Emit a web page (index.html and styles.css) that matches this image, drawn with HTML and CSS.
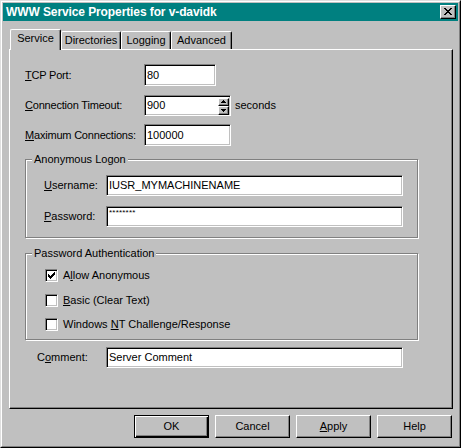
FILE: index.html
```html
<!DOCTYPE html>
<html>
<head>
<meta charset="utf-8">
<link rel="stylesheet" href="styles.css">
</head>
<body>
<div class="window">
  <div class="window-inner">
    <div class="titlebar">
      <span class="title">WWW Service Properties for v-davidk</span>
      <div class="close">
        <svg width="8" height="7" viewBox="0 0 8 7" shape-rendering="crispEdges"><path d="M0 0h2v1h-2zM6 0h2v1h-2zM1 1h2v1h-2zM5 1h2v1h-2zM2 2h4v1h-4zM3 3h2v1h-2zM2 4h4v1h-4zM1 5h2v1h-2zM5 5h2v1h-2zM0 6h2v1h-2zM6 6h2v1h-2z" fill="#000"/></svg>
      </div>
    </div>
    <div class="body">
      <div class="tabs">
        <div class="tab active w-service">Service</div>
        <div class="tab w-dir">Directories</div>
        <div class="tab w-log">Logging</div>
        <div class="tab w-adv">Advanced</div>
      </div>
      <div class="panel">
        <div class="row row1">
          <span class="label lbl-main"><u>T</u>CP Port:</span>
          <div class="edit w72">80</div>
        </div>
        <div class="row row2">
          <span class="label lbl-main"><u>C</u>onnection Timeout:</span>
          <div class="edit w87 spin-edit">
            <span class="edit-text">900</span>
            <div class="spinner">
              <div class="spin-btn up"><svg width="5" height="3" viewBox="0 0 5 3" shape-rendering="crispEdges"><path d="M2 0h1v1h-1zM1 1h3v1h-3zM0 2h5v1h-5z" fill="#000"/></svg></div>
              <div class="spin-btn down"><svg width="5" height="3" viewBox="0 0 5 3" shape-rendering="crispEdges"><path d="M0 0h5v1h-5zM1 1h3v1h-3zM2 2h1v1h-1z" fill="#000"/></svg></div>
            </div>
          </div>
          <span class="suffix">seconds</span>
        </div>
        <div class="row row3">
          <span class="label lbl-main"><u>M</u>aximum Connections:</span>
          <div class="edit w87">100000</div>
        </div>

        <div class="group group1">
          <div class="group-title">Anonymous Logon</div>
          <div class="row grow first">
            <span class="label lbl-group"><u>U</u>sername:</span>
            <div class="edit wide">IUSR_MYMACHINENAME</div>
          </div>
          <div class="row grow second">
            <span class="label lbl-group"><u>P</u>assword:</span>
            <div class="edit wide pw"><span class="stars">********</span></div>
          </div>
        </div>

        <div class="group group2">
          <div class="group-title">Password Authentication</div>
          <div class="check-row c1">
            <div class="checkbox"><svg width="7" height="7" viewBox="0 0 7 7" shape-rendering="crispEdges"><path d="M6 0h1v1h-1zM5 1h2v1h-2zM0 2h1v1h-1zM4 2h3v1h-3zM0 3h2v1h-2zM3 3h3v1h-3zM0 4h5v1h-5zM1 5h3v1h-3zM2 6h1v1h-1z" fill="#000"/></svg></div>
            <span>A<u>l</u>low Anonymous</span>
          </div>
          <div class="check-row c2">
            <div class="checkbox"></div>
            <span><u>B</u>asic (Clear Text)</span>
          </div>
          <div class="check-row c3">
            <div class="checkbox"></div>
            <span>Windows <u>N</u>T Challenge/Response</span>
          </div>
        </div>

        <div class="row comment-row">
          <span class="label lbl-comment">C<u>o</u>mment:</span>
          <div class="edit wide">Server Comment</div>
        </div>
      </div>
      <div class="buttons">
        <div class="btn default">OK</div>
        <div class="btn">Cancel</div>
        <div class="btn"><u>A</u>pply</div>
        <div class="btn">Help</div>
      </div>
    </div>
  </div>
</div>
</body>
</html>
```
FILE: styles.css
```css
html, body {
  margin: 0;
  padding: 0;
  background: #c0c0c0;
}
body {
  font-family: "Liberation Sans", Arial, sans-serif;
  font-size: 11px;
  line-height: 13px;
  color: #000;
}
u { text-decoration: underline; text-underline-offset: 1px; }

.window {
  width: 461px;
  height: 448px;
  box-sizing: border-box;
  border: 1px solid;
  border-color: #dfdfdf #000 #000 #dfdfdf;
  background: #c0c0c0;
}
.window-inner {
  height: 100%;
  box-sizing: border-box;
  border: 1px solid;
  border-color: #fff #808080 #808080 #fff;
  padding: 1px;
}

.titlebar {
  height: 18px;
  background: #008080;
  color: #fff;
  display: flex;
  align-items: center;
  justify-content: space-between;
  padding: 0 2px 0 3px;
}
.title {
  font-weight: bold;
  font-size: 12px;
  letter-spacing: -0.1px;
}
.close {
  width: 16px;
  height: 14px;
  box-sizing: border-box;
  background: #c0c0c0;
  border: 1px solid;
  border-color: #fff #000 #000 #fff;
  box-shadow: inset -1px -1px #808080;
  display: flex;
  align-items: center;
  justify-content: center;
  padding: 0 1px 1px 0;
}
.close svg { display: block; }

.body {
  padding-left: 6px;
}

.tabs {
  display: flex;
  align-items: flex-end;
  height: 20px;
  margin-top: 8px;
  padding-left: 1px;
}
.tab {
  box-sizing: border-box;
  height: 18px;
  border-top: 1px solid #fff;
  border-left: 1px solid #fff;
  border-right: 1px solid #000;
  border-radius: 2px 2px 0 0;
  box-shadow: inset -1px 0 #808080;
  text-align: center;
  padding-top: 2px;
}
.tab.active {
  height: 21px;
  margin-bottom: -1px;
  position: relative;
  z-index: 1;
  background: #c0c0c0;
  padding-top: 2px;
}
.w-service { width: 51px; }
.w-dir { width: 60px; }
.w-log { width: 50px; }
.w-adv { width: 61px; }

.panel {
  width: 444px;
  height: 360px;
  box-sizing: border-box;
  border: 1px solid;
  border-color: #fff #000 #000 #fff;
  box-shadow: inset -1px -1px #808080;
  padding: 14px 0 0 15px;
}

.row {
  display: flex;
  align-items: center;
}
.label { flex: none; }
.lbl-main { width: 119px; letter-spacing: -0.2px; }
.row1 { height: 22px; }
.row2 { height: 21px; margin-top: 9px; }
.row3 { height: 22px; margin-top: 8px; }

.edit {
  box-sizing: border-box;
  height: 100%;
  background: #fff;
  border: 1px solid;
  border-color: #808080 #fff #fff #808080;
  box-shadow: inset 1px 1px #000, inset -1px -1px #c0c0c0;
  padding: 0 0 0 2px;
  display: flex;
  align-items: center;
  white-space: nowrap;
}
.w72 { width: 72px; }
.w87 { width: 87px; }
.wide { width: 297px; height: 21px; }

.spin-edit {
  padding-right: 1px;
  justify-content: space-between;
}
.spinner {
  width: 11px;
  height: 17px;
  display: flex;
  flex-direction: column;
  margin-top: 1px;
}
.spin-btn {
  flex: 1;
  box-sizing: border-box;
  background: #c0c0c0;
  border: 1px solid;
  border-color: #fff #000 #000 #fff;
  box-shadow: inset -1px -1px #808080;
  display: flex;
  align-items: center;
  justify-content: center;
}
.spin-btn svg { display: block; }
.suffix { margin-left: 4px; }

.group {
  box-sizing: border-box;
  width: 393px;
  border: 1px solid #808080;
  box-shadow: inset 1px 1px #fff, 1px 1px #fff;
}
.group1 { height: 79px; margin-top: 13px; }
.group2 { height: 87px; margin-top: 15px; }
.group-title {
  width: fit-content;
  margin: -7px 0 0 6px;
  padding: 0 2px;
  background: #c0c0c0;
  position: relative;
}
.grow { height: 21px; padding-left: 18px; }
.grow.first { margin-top: 9px; }
.grow.second { margin-top: 10px; }
.lbl-group { width: 62px; }
.pw { align-items: flex-start; }
.stars {
  font-size: 8px;
  line-height: 9px;
  letter-spacing: 0.2px;
  margin-top: 1px;
}

.check-row {
  display: flex;
  align-items: center;
  height: 13px;
  padding-left: 19px;
}
.c1 { margin-top: 9px; }
.c2 { margin-top: 12px; }
.c3 { margin-top: 11px; }
.checkbox {
  width: 13px;
  height: 13px;
  box-sizing: border-box;
  flex: none;
  background: #fff;
  border: 1px solid;
  border-color: #808080 #fff #fff #808080;
  box-shadow: inset 1px 1px #000, inset -1px -1px #c0c0c0;
  margin-right: 5px;
  display: flex;
  align-items: center;
  justify-content: center;
}
.checkbox svg { display: block; }

.comment-row { height: 21px; margin-top: 7px; padding-left: 12px; }
.lbl-comment { width: 69px; }

.buttons {
  width: 444px;
  display: flex;
  justify-content: flex-end;
  gap: 6px;
  margin-top: 6px;
  padding-right: 1px;
  box-sizing: border-box;
}
.btn {
  width: 75px;
  height: 23px;
  box-sizing: border-box;
  border: 1px solid;
  border-color: #fff #000 #000 #fff;
  box-shadow: inset -1px -1px #808080;
  display: flex;
  align-items: center;
  justify-content: center;
}
.btn.default {
  border-color: #000;
  box-shadow: inset 1px 1px #fff, inset -1px -1px #000, inset -2px -2px #808080;
}
```
